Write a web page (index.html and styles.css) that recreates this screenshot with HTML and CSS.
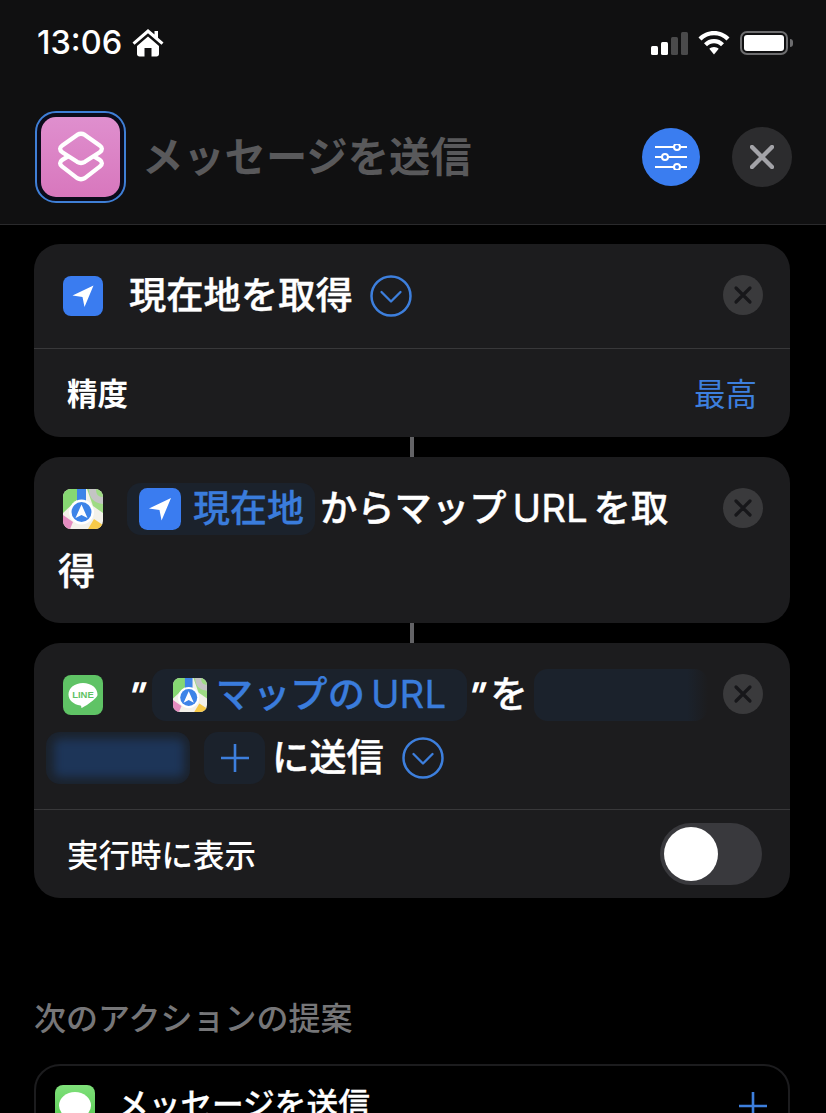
FILE: index.html
```html
<!DOCTYPE html>
<html lang="ja">
<head>
<meta charset="utf-8">
<title>メッセージを送信</title>
<link rel="stylesheet" href="styles.css">
</head>
<body>
<svg class="defs" width="0" height="0" aria-hidden="true">
  <defs>
    <symbol id="maps" viewBox="0 0 40 40">
      <rect width="40" height="40" fill="#f3f1ea"/>
      <path d="M0 0H15V10L0 24Z" fill="#86d872"/>
      <path d="M24 0H40V24L30 17Z" fill="#9edb84"/>
      <path d="M26 0C26 9 31 14 40 15V8C35 8 33 5 33 0Z" fill="#c4c4c4"/>
      <path d="M0 26L10 33L7 40H0Z" fill="#e48cc0"/>
      <path d="M25 40L31 30L40 36V40Z" fill="#f7c948"/>
      <path d="M14 0H23V16H14Z" fill="#3d84e8"/>
      <circle cx="18.500" cy="23" r="12.500" fill="#fff"/>
      <circle cx="18.500" cy="23" r="10" fill="#3d84e8"/>
      <path d="M18.500 15.500L24.500 29L18.500 26L12.500 29Z" fill="#fff"/>
    </symbol>
    <symbol id="arrow" viewBox="0 0 40 40">
      <rect width="40" height="40" rx="8" fill="#3a7cf0"/>
      <path d="M30.500 9.500L9.500 19.500L19.500 21L21.500 31Z" fill="#fff"/>
    </symbol>
    <symbol id="chev" viewBox="0 0 42 42">
      <circle cx="21" cy="21" r="19.500" fill="none" stroke="#3d7fdd" stroke-width="2.500"/>
      <path d="M11.500 17L21 26.500L30.500 17" fill="none" stroke="#3d7fdd" stroke-width="2.300" stroke-linecap="round" stroke-linejoin="round"/>
    </symbol>
    <symbol id="close" viewBox="0 0 40 40">
      <circle cx="20" cy="20" r="20" fill="#3a3a3c"/>
      <path d="M13 13L27 27M27 13L13 27" stroke="#17171a" stroke-width="3.200" stroke-linecap="round"/>
    </symbol>
  </defs>
</svg>

<header class="topbar">
  <div class="status">
    <div class="status-left">
      <span class="clock">13:06</span>
      <svg class="home" viewBox="0 0 32 28"><path d="M16 0L0.500 13.500L2.500 15.800L16 4.300L29.500 15.800L31.500 13.500L26 8.700V2H22.500V5.600Z" fill="#fff"/><path d="M5 17L16 7.500L27 17V25C27 26.500 26 27.500 24.500 27.500H19.500V19H12.500V27.500H7.500C6 27.500 5 26.500 5 25Z" fill="#fff"/></svg>
    </div>
    <div class="status-right">
      <svg class="signal" viewBox="0 0 37 23"><rect x="0" y="14" width="7" height="9" rx="1.500" fill="#fff"/><rect x="10" y="10" width="7" height="13" rx="1.500" fill="#fff"/><rect x="20" y="5" width="7" height="18" rx="1.500" fill="#4a4a4b"/><rect x="30" y="0" width="7" height="23" rx="1.500" fill="#4a4a4b"/></svg>
      <svg class="wifi" viewBox="0 0 32 24"><path d="M16 0C10 0 4.500 2.400 .5 6.500L3.500 9.500C6.800 6.200 11.200 4.300 16 4.300S25.200 6.200 28.500 9.500L31.500 6.500C27.500 2.400 22 0 16 0Z" fill="#fff"/><path d="M16 8C12 8 8.700 9.500 6 12.200L9 15.200C10.900 13.400 13.300 12.300 16 12.300S21.100 13.400 23 15.200L26 12.200C23.300 9.500 20 8 16 8Z" fill="#fff"/><path d="M16 16C14.200 16 12.600 16.700 11.300 17.800L16 23.500L20.700 17.800C19.400 16.700 17.800 16 16 16Z" fill="#fff"/></svg>
      <div class="battery"><div class="battery-body"><div class="battery-fill"></div></div><div class="battery-cap"></div></div>
    </div>
  </div>
  <div class="titlebar">
    <div class="app-ring">
      <div class="app-icon">
        <svg viewBox="0 0 50 54"><path d="M12 26L5.500 30C2.500 32 2.500 35 5.500 37L21 49C23.500 50.500 26.500 50.500 29 49L44.500 37C47.500 35 47.500 32 44.500 30L38 26" fill="none" stroke="#fff" stroke-width="4.500" stroke-linejoin="round"/><path d="M21 4C23.500 2.500 26.500 2.500 29 4L44.500 15C47.500 17 47.500 20 44.500 22L29 32C26.500 33.500 23.500 33.500 21 32L5.500 22C2.500 20 2.500 17 5.500 15Z" fill="none" stroke="#fff" stroke-width="4.500" stroke-linejoin="round"/></svg>
      </div>
    </div>
    <h1 class="title">メッセージを送信</h1>
    <div class="title-actions">
      <div class="btn-settings">
        <svg viewBox="0 0 34 26"><path d="M1 3H33M1 13H33M1 23H33" stroke="#fff" stroke-width="2"/><circle cx="23" cy="3" r="3" fill="#3a7df0" stroke="#fff" stroke-width="2"/><circle cx="11" cy="13" r="3" fill="#3a7df0" stroke="#fff" stroke-width="2"/><circle cx="23" cy="23" r="3" fill="#3a7df0" stroke="#fff" stroke-width="2"/></svg>
      </div>
      <div class="btn-close">
        <svg viewBox="0 0 24 24"><path d="M2 2L22 22M22 2L2 22" stroke="#a3a3a8" stroke-width="4.400" stroke-linecap="round"/></svg>
      </div>
    </div>
  </div>
</header>

<main class="content">
  <section class="card">
    <div class="flow">
      <div class="line">
        <svg class="icon-app"><use href="#arrow"/></svg>
        <span class="txt">現在地を取得</span>
        <svg class="chev"><use href="#chev"/></svg>
      </div>
    </div>
    <svg class="remove"><use href="#close"/></svg>
    <div class="row">
      <span class="row-label strong">精度</span>
      <span class="row-value">最高</span>
    </div>
  </section>

  <div class="connector"></div>

  <section class="card">
    <div class="flow">
      <div class="line">
        <svg class="icon-app maps-sq"><use href="#maps"/></svg>
        <span class="chip chip-loc"><svg class="chip-arrow"><use href="#arrow"/></svg><span class="chip-text">現在地</span></span>
        <span class="txt txt-after">からマップ<span class="latin">URL</span>を取</span>
      </div>
      <div class="line"><span class="txt txt-wrap">得</span></div>
    </div>
    <svg class="remove"><use href="#close"/></svg>
  </section>

  <div class="connector"></div>

  <section class="card">
    <div class="flow">
      <div class="line">
        <svg class="icon-app" viewBox="0 0 40 40">
          <rect width="40" height="40" rx="8" fill="#5fc365"/>
          <path d="M20 8C11.700 8 5.500 13 5.500 19.500C5.500 25 10.500 29.500 17.500 30.500C18.500 30.800 18.300 33 18.500 33C19.500 33 28 27.500 31 24.500C33.500 22.500 34.500 21 34.500 19.500C34.500 13 28.300 8 20 8Z" fill="#fff"/>
          <text class="line-logo" x="20" y="23" text-anchor="middle">LINE</text>
        </svg>
        <span class="quote">"</span>
        <span class="chip chip-url"><svg class="maps-small"><use href="#maps"/></svg><span class="chip-text latin-mix">マップの<span class="latin">URL</span></span></span>
        <span class="quote quote-end">"</span><span class="txt">を</span>
        <span class="chip chip-blank"></span>
      </div>
      <div class="line line-second">
        <span class="chip chip-blur"><span class="blur-bar"></span></span>
        <span class="chip chip-plus"><svg viewBox="0 0 28 28"><path d="M14 0V28M0 14H28" stroke="#3d7fdd" stroke-width="2.600"/></svg></span>
        <span class="txt txt-send">に送信</span>
        <svg class="chev"><use href="#chev"/></svg>
      </div>
    </div>
    <svg class="remove"><use href="#close"/></svg>
    <div class="row">
      <span class="row-label">実行時に表示</span>
      <div class="toggle"><div class="knob"></div></div>
    </div>
  </section>

  <h2 class="section-title">次のアクションの提案</h2>

  <section class="suggest">
    <div class="suggest-icon"><div class="bubble"></div></div>
    <span class="suggest-text">メッセージを送信</span>
    <svg class="suggest-plus" viewBox="0 0 28 28"><path d="M14 0V28M0 14H28" stroke="#3d7fdd" stroke-width="2.600"/></svg>
  </section>
</main>
</body>
</html>
```

FILE: styles.css
```css
* { box-sizing: border-box; }
html, body { margin: 0; padding: 0; }
body {
  width: 826px;
  height: 1113px;
  overflow: hidden;
  background: #000;
  color: #fff;
  font-family: Inter, "Noto Sans CJK JP", sans-serif;
}
.defs { position: absolute; }

.topbar {
  height: 225px;
  background: #101011;
  border-bottom: 1px solid #2a2a2c;
}
.status {
  height: 86px;
  padding: 0 33px 0 37px;
  display: flex;
  justify-content: space-between;
  align-items: center;
}
.status-left { display: flex; align-items: center; gap: 10px; }
.clock { font-size: 32.500px; font-weight: 500; line-height: 40px; }
.home { width: 32px; height: 28px; }
.status-right { display: flex; align-items: center; gap: 9px; }
.signal { width: 37px; height: 23px; margin-right: 1px; }
.wifi { width: 32px; height: 24px; }
.battery { display: flex; align-items: center; gap: 2px; margin-left: 1px; }
.battery-body {
  width: 48px;
  height: 24px;
  border: 2px solid #6d6d6f;
  border-radius: 7px;
  padding: 2px;
}
.battery-fill { width: 100%; height: 100%; background: #fff; border-radius: 3px; }
.battery-cap { width: 3px; height: 8px; background: #6d6d6f; border-radius: 0 3px 3px 0; }

.titlebar {
  height: 138px;
  padding: 4px 34px 0 35px;
  display: flex;
  align-items: center;
}
.app-ring {
  width: 91px;
  height: 92px;
  padding: 4px;
  border: 2px solid #3f7fd6;
  border-radius: 21px;
  background: #0b0b1a;
  flex: none;
}
.app-icon {
  height: 100%;
  border-radius: 15px;
  background: linear-gradient(180deg, #df8fce, #d877bd);
  display: flex;
  align-items: center;
  justify-content: center;
}
.app-icon svg { width: 48px; height: 52px; }
.title {
  margin: 0 0 0 16px;
  font-size: 41.300px;
  font-weight: 700;
  line-height: 52px;
  color: #59595b;
  white-space: nowrap;
}
.title-actions { margin-left: auto; display: flex; align-items: center; gap: 32px; }
.btn-settings {
  width: 58px;
  height: 58px;
  border-radius: 50%;
  background: #3a7df0;
  display: flex;
  align-items: center;
  justify-content: center;
}
.btn-settings svg { width: 34px; height: 26px; }
.btn-close {
  width: 60px;
  height: 60px;
  border-radius: 50%;
  background: #2c2c2e;
  display: flex;
  align-items: center;
  justify-content: center;
}
.btn-close svg { width: 24px; height: 24px; }

.content { padding: 19px 36px 0 34px; }
.card { position: relative; background: #1c1c1e; border-radius: 26px; overflow: hidden; }
.connector { width: 4px; height: 20px; margin: 0 auto; background: #636366; }

.flow { padding: 20px 0 21px; }
.card + .connector + .card .flow { padding-bottom: 20px; }
.line { height: 63px; display: flex; align-items: center; white-space: nowrap; }
.icon-app { width: 40px; height: 40px; margin-left: 29px; margin-right: 26px; flex: none; }
.maps-sq { border-radius: 8px; margin-right: 24px; }
.txt {
  font-size: 37.300px;
  font-weight: 500;
  -webkit-text-stroke: 0.4px #fff;
  line-height: 52px;
  color: #fff;
}
.chev { width: 42px; height: 42px; margin-left: 17px; flex: none; }
.remove { position: absolute; top: 31px; right: 27px; width: 40px; height: 40px; }

.row {
  height: 89px;
  border-top: 1px solid #38383a;
  padding: 0 33px 2px 33px;
  display: flex;
  justify-content: space-between;
  align-items: center;
}
.row-label { font-size: 31.500px; font-weight: 500; }
.row-label.strong { font-size: 30.500px; font-weight: 700; }
.row-value { font-size: 31.500px; color: #3d7fdd; }

.chip {
  height: 52px;
  border-radius: 14px;
  background: #1b222c;
  display: inline-flex;
  align-items: center;
  flex: none;
}
.chip-loc { width: 188px; padding-left: 12px; }
.chip-arrow { width: 42px; height: 42px; flex: none; }
.chip-text {
  margin-left: 12px;
  font-size: 37px;
  font-weight: 500;
  -webkit-text-stroke: 0.3px #3a7cdc;
  color: #3a7cdc;
  line-height: 52px;
}
.txt-after { margin-left: 5px; }
.txt-wrap { margin-left: 24px; }
.latin { font-size: 38.500px; font-weight: 400; margin: 0 6px; }
.quote { font-size: 34px; font-weight: 700; font-style: italic; line-height: 52px; margin-left: -2px; margin-right: 6px; transform: skewX(-8deg); }
.chip-url { width: 315px; padding-left: 21px; }
.maps-small { width: 34px; height: 34px; border-radius: 7px; flex: none; }
.latin-mix { margin-left: 9px; font-size: 37.300px; }
.quote-end { margin-left: 0; margin-right: 5px; }
.chip-blank {
  width: 174px;
  margin-left: 6px;
  background: linear-gradient(90deg, #1b222c 88%, #1c1c1e);
}
.chip-blur { width: 144px; margin-left: 12px; overflow: hidden; padding-left: 8px; }
.blur-bar {
  display: block;
  width: 130px;
  height: 38px;
  background: #1d3558;
  filter: blur(5px);
  border-radius: 6px;
}
.chip-plus { width: 61px; margin-left: 14px; justify-content: center; }
.chip-plus svg { width: 28px; height: 28px; }
.txt-send { margin-left: 7px; }
.line-second .chev { margin-left: 18px; }
.line-logo { font-family: "Liberation Sans", sans-serif; font-size: 9.500px; font-weight: 700; fill: #5fc365; }

.toggle {
  width: 102px;
  height: 62px;
  border-radius: 31px;
  background: #39393d;
  padding: 4px;
  margin-right: -5px;
  margin-bottom: -2px;
}
.knob { width: 54px; height: 54px; border-radius: 50%; background: #fff; }

.section-title {
  margin: 101px 0 25px 0;
  font-size: 32px;
  font-weight: 500;
  line-height: 40px;
  color: #767678;
}
.suggest {
  height: 120px;
  border: 2px solid #1c1c1e;
  border-radius: 26px;
  padding: 19px 21px 0 19px;
  display: flex;
  align-items: flex-start;
}
.suggest-icon {
  width: 40px;
  height: 40px;
  border-radius: 8px;
  background: linear-gradient(180deg, #7fe07a, #54c94f);
  display: flex;
  align-items: center;
  justify-content: center;
  flex: none;
}
.bubble { width: 32px; height: 27px; border-radius: 50%; background: #fff; }
.suggest-text {
  margin-left: 22px;
  font-size: 31.700px;
  font-weight: 500;
  -webkit-text-stroke: 0.3px #fff;
  line-height: 40px;
}
.suggest-plus { width: 28px; height: 28px; margin-left: auto; margin-top: 7px; }
```
